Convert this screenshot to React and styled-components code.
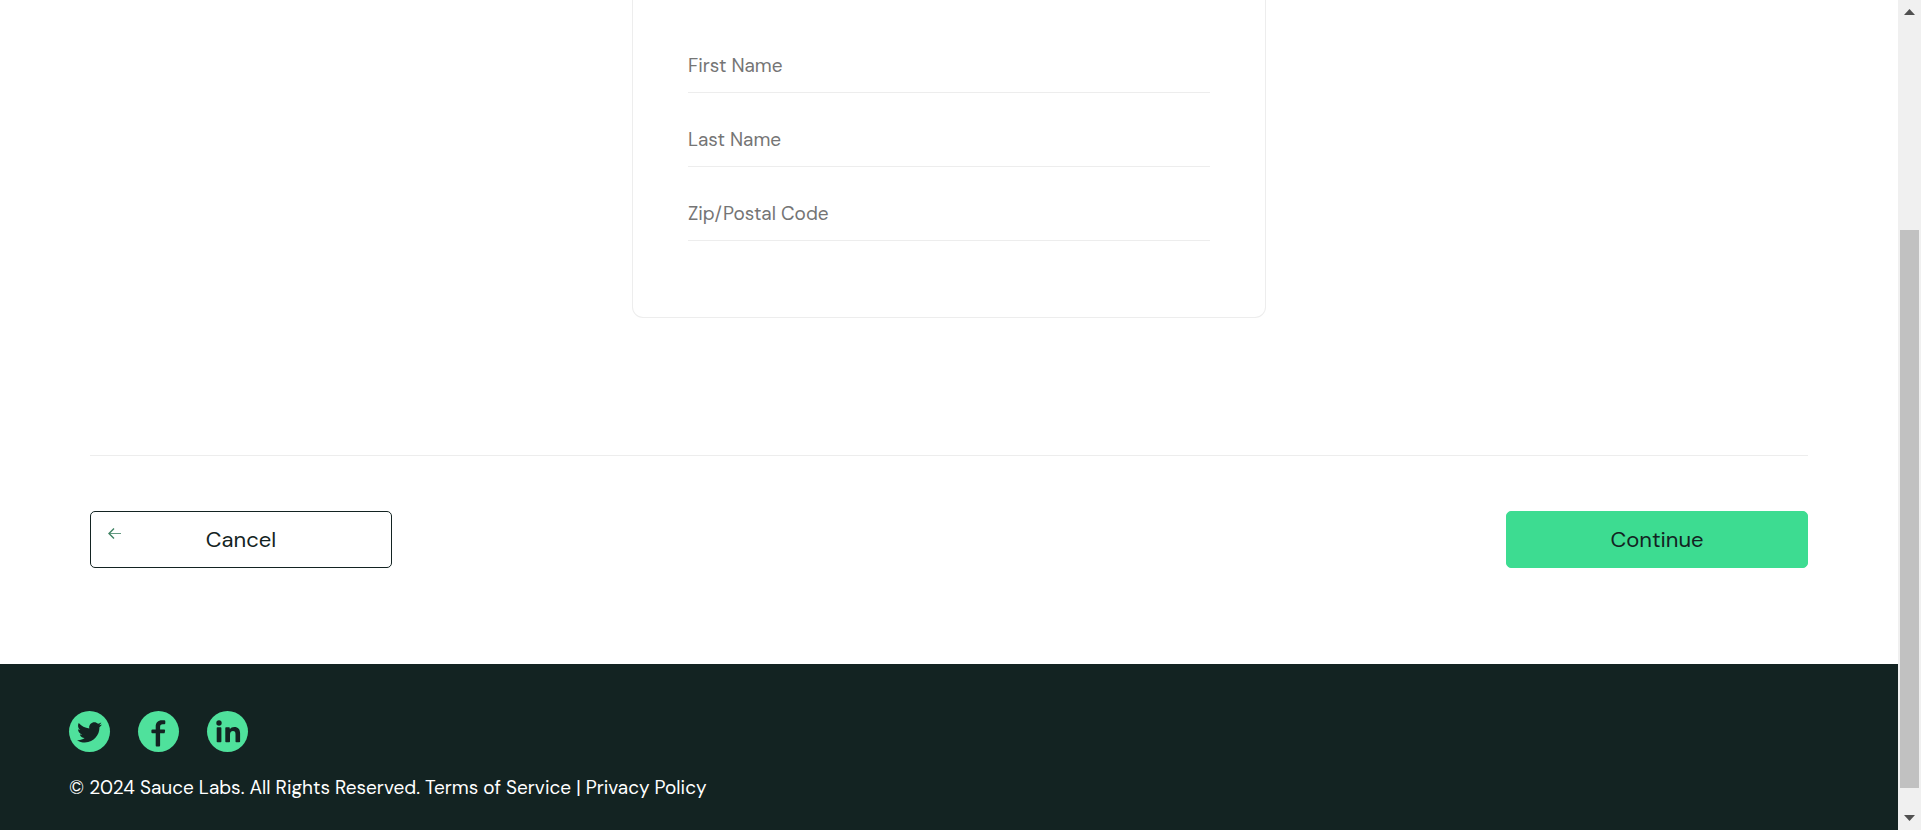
import React from 'react';
import styled, { createGlobalStyle } from 'styled-components';

const GlobalStyle = createGlobalStyle`
  *, *::before, *::after { box-sizing: border-box; }
  body {
    margin: 0;
    background: #fff;
    color: #132322;
    font-family: 'DM Sans', Inter, 'Liberation Sans', sans-serif;
  }
`;

const Shell = styled.div`
  display: flex;
  min-height: 100vh;
`;

const Page = styled.div`
  flex: 1;
  min-width: 0;
  display: flex;
  flex-direction: column;
`;

const CheckoutForm = styled.form`
  display: flex;
  flex-direction: column;
  padding: 0 90px 96px;
`;

const Card = styled.div`
  width: 100%;
  max-width: 634px;
  align-self: center;
  display: flex;
  flex-direction: column;
  gap: 18px;
  padding: 37px 55px 76px;
  border: 1px solid #ededed;
  border-top: 0;
  border-radius: 0 0 11px 11px;
`;

const Field = styled.input`
  width: 100%;
  height: 56px;
  padding: 2px 0 0;
  border: 0;
  border-bottom: 1px solid #ededed;
  border-radius: 0;
  outline: 0;
  background: transparent;
  color: #484c55;
  font: 400 19px/24px 'DM Sans', Inter, 'Liberation Sans', sans-serif;

  &::placeholder {
    color: #757575;
    opacity: 1;
  }
`;

const Actions = styled.div`
  display: flex;
  justify-content: space-between;
  margin-top: 137px;
  padding-top: 55px;
  border-top: 1px solid #ededed;
`;

const ActionButton = styled.button`
  position: relative;
  width: 302px;
  height: 57px;
  padding: 0;
  border: 1px solid ${(p) => (p.$primary ? '#3ddc91' : '#132322')};
  border-radius: 5px;
  background: ${(p) => (p.$primary ? '#3ddc91' : '#fff')};
  color: #132322;
  font: 400 22px/28px 'DM Sans', Inter, 'Liberation Sans', sans-serif;
  cursor: pointer;
`;

const BackArrow = styled.svg`
  position: absolute;
  top: 14px;
  left: 16px;
  width: 14px;
  height: 14px;
`;

const Footer = styled.footer`
  flex: 1;
  display: flex;
  flex-direction: column;
  gap: 23px;
  padding: 47px 69px 28px;
  background: #132322;
  color: #fff;
`;

const SocialList = styled.ul`
  display: flex;
  gap: 28px;
  margin: 0;
  padding: 0;
  list-style: none;
`;

const SocialLink = styled.a`
  display: block;
  width: 41px;
  height: 41px;
  border-radius: 50%;
  background: #4fe19c;
  color: #132322;
`;

const SocialGlyph = styled.svg`
  display: block;
  width: 41px;
  height: 41px;
  fill: currentColor;
`;

const Copyright = styled.p`
  margin: 0;
  font-size: 19px;
  line-height: 26px;
`;

const Scrollbar = styled.div`
  position: sticky;
  top: 0;
  width: 23px;
  height: 100vh;
  display: flex;
  flex-direction: column;
  align-items: center;
  padding: 0 2px;
  background: #f0f0f0;
`;

const ScrollArrow = styled.svg`
  flex: none;
  width: 19px;
  height: 23px;
  fill: #505050;
`;

const ScrollTrack = styled.div`
  flex: 1;
  width: 100%;
  display: flex;
  flex-direction: column;
  justify-content: flex-end;
  padding-bottom: 19px;
`;

const ScrollThumb = styled.div`
  height: 73%;
  background: #c1c1c1;
`;

const fields = [
  { name: 'firstName', label: 'First Name' },
  { name: 'lastName', label: 'Last Name' },
  { name: 'postalCode', label: 'Zip/Postal Code' },
];

const socials = [
  {
    name: 'Twitter',
    glyph: (
      <path
        transform="translate(8 8.800) scale(0.0488)"
        d="M459.370 151.716c.325 4.548.325 9.097.325 13.645 0 138.720-105.583 298.558-298.558 298.558-59.452 0-114.680-17.219-161.137-47.106 8.447.974 16.568 1.299 25.340 1.299 49.055 0 94.213-16.568 130.274-44.832-46.132-.975-84.792-31.188-98.112-72.772 6.498.974 12.995 1.624 19.818 1.624 9.421 0 18.843-1.300 27.614-3.573-48.081-9.747-84.143-51.980-84.143-102.985v-1.299c13.969 7.797 30.214 12.670 47.431 13.319-28.264-18.843-46.781-51.005-46.781-87.391 0-19.492 5.197-37.360 14.294-52.954 51.655 63.675 129.300 105.258 216.365 109.807-1.624-7.797-2.599-15.918-2.599-24.040 0-57.828 46.782-104.934 104.934-104.934 30.213 0 57.502 12.670 76.670 33.137 23.715-4.548 46.456-13.320 66.599-25.340-7.798 24.366-24.366 44.833-46.132 57.827 21.117-2.273 41.584-8.122 60.426-16.243-14.292 20.791-32.161 39.308-52.628 54.253z"
      />
    ),
  },
  {
    name: 'Facebook',
    glyph: (
      <path d="M17.700 34.600V22.300h-3.200q-1.100 0-1.100-1v-1.800q0-1 1.100-1h3.200v-2.700c0-4.200 2.300-6.500 6.300-6.500h2.300q1 0 1 1v1.900q0 1-1 1h-1.600c-1.900 0-2.600.9-2.600 2.700v2.600h4.100q1 0 .9 1l-.3 1.900q-.2.900-1.100.9h-3.600v12.300q0 .9-.9.900h-2.600q-.9 0-.9-.9z" />
    ),
  },
  {
    name: 'LinkedIn',
    glyph: (
      <>
        <circle cx="12" cy="12" r="2.700" />
        <rect x="9.700" y="16.300" width="4.700" height="15" rx="0.800" />
        <path d="M18.300 17.100q0-.8.800-.8h2.900q.8 0 .8.800v1.100c1-1.500 2.600-2.200 4.500-2.200 3.900 0 5.800 2.300 5.800 6.400v8.100q0 .8-.8.800h-3q-.8 0-.8-.8v-7.300c0-2-.7-3.200-2.500-3.200-2 0-3 1.300-3 3.400v7.100q0 .8-.8.800h-3.100q-.8 0-.8-.8z" />
      </>
    ),
  },
];

export default function App() {
  return (
    <>
      <GlobalStyle />
      <Shell>
        <Page>
          <CheckoutForm onSubmit={(e) => e.preventDefault()}>
            <Card>
              {fields.map((f) => (
                <Field key={f.name} type="text" name={f.name} placeholder={f.label} aria-label={f.label} />
              ))}
            </Card>
            <Actions>
              <ActionButton type="button">
                <BackArrow viewBox="0 0 14 14" fill="none" stroke="#3f8263" aria-hidden="true">
                  <path d="M14 7.500H2" strokeOpacity="0.8" />
                  <path d="M7 2.500L2 7.500l5 5" strokeWidth="1.400" />
                </BackArrow>
                Cancel
              </ActionButton>
              <ActionButton type="submit" $primary>Continue</ActionButton>
            </Actions>
          </CheckoutForm>
          <Footer>
            <SocialList>
              {socials.map(({ name, glyph }) => (
                <li key={name}>
                  <SocialLink href="#" aria-label={name}>
                    <SocialGlyph viewBox="0 0 41 41" aria-hidden="true">{glyph}</SocialGlyph>
                  </SocialLink>
                </li>
              ))}
            </SocialList>
            <Copyright>
              © 2024 Sauce Labs. All Rights Reserved. Terms of Service | Privacy Policy
            </Copyright>
          </Footer>
        </Page>
        <Scrollbar aria-hidden="true">
          <ScrollArrow viewBox="0 0 19 23"><path d="M4 15l5.500-6 5.500 6z" /></ScrollArrow>
          <ScrollTrack><ScrollThumb /></ScrollTrack>
          <ScrollArrow viewBox="0 0 19 23"><path d="M4 8l5.500 6 5.500-6z" /></ScrollArrow>
        </Scrollbar>
      </Shell>
    </>
  );
}
